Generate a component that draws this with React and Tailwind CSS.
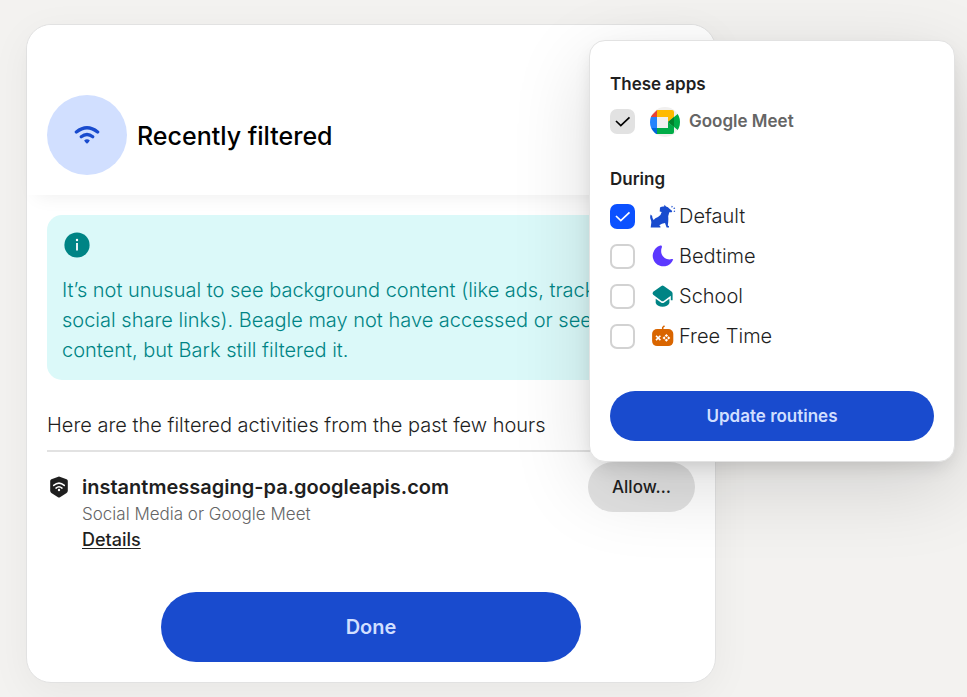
import React from "react";

function WifiIcon({ className }) {
  return (
    <svg viewBox="0 0 26 20" className={className} fill="none" stroke="currentColor" aria-hidden="true">
      <path d="M2.4 7Q13 -1.4 23.6 7" strokeWidth="3.4" strokeLinecap="round" />
      <path d="M7.2 11.8Q13 7.2 18.8 11.8" strokeWidth="3.2" strokeLinecap="round" />
      <path d="M10.2 15.2Q13 13.2 15.8 15.2Q15 17.6 13 18.8Q11 17.6 10.2 15.2Z" fill="currentColor" stroke="none" />
    </svg>
  );
}

function ShieldIcon() {
  return (
    <svg viewBox="0 0 20 22" className="h-[22px] w-5 shrink-0" aria-hidden="true">
      <path d="M9 .4 16.6 3.3Q17.8 3.8 17.8 5V14.6Q17.8 16.2 16.6 17.1L10 21.2Q9 21.8 8 21.2L1.4 17.1Q.2 16.2 .2 14.6V5Q.2 3.8 1.4 3.3Z" fill="#1f1f1f" />
      <path d="M3.7 9.4Q9 4.8 14.3 9.4M6 12.1Q9 9.5 12 12.1" fill="none" stroke="#fff" strokeWidth="1.5" strokeLinecap="round" />
      <circle cx="9" cy="14" r="1.2" fill="#fff" />
    </svg>
  );
}

function InfoIcon() {
  return (
    <svg viewBox="0 0 30 30" className="size-[30px]" aria-hidden="true">
      <circle cx="15" cy="15" r="12.6" fill="#008485" />
      <circle cx="15" cy="10" r="1.2" fill="#fff" />
      <path d="M15 13v7.6" stroke="#fff" strokeWidth="1.8" />
    </svg>
  );
}

function MeetIcon() {
  return (
    <svg viewBox="0 0 30 30" className="size-[30px] shrink-0" aria-hidden="true">
      <clipPath id="meet-disc"><circle cx="15" cy="15" r="15" /></clipPath>
      <g clipPath="url(#meet-disc)">
        <path fill="#f1f0ef" d="M0 0h30v30H0z" />
        <path fill="#ea4335" d="M0 10 7 3v7z" />
        <path fill="#2684fc" d="M0 10h7v11H0z" />
        <path fill="#0066da" d="M0 21h7v6H0z" />
        <path fill="#ffba00" d="M7 3h15q2 0 2 2v5l-6 5v-5H7z" />
        <path fill="#00ac47" d="M7 21h11v-6l6 5v5q0 2-2 2H7z" />
        <path fill="#00ac47" d="M18 15 28 6.8q2-1 2 1v14.4q0 2-2 1z" />
        <path fill="#00832d" d="M18 15l6-5v10z" />
      </g>
    </svg>
  );
}

function DogIcon() {
  return (
    <svg viewBox="0 0 26 26" className="size-[26px]" aria-hidden="true">
      <path d="M.7 11.5Q-.4 14 .7 16.5Q1.6 18.4 1.2 20.5L.7 24.5H10.4Q10.8 23 9.2 22.2Q11.8 20.6 15 20L16.6 24.5H19V23.3L17.8 22.6Q18.6 17.6 18.2 13.2L19.3 9.2H21.6Q22.4 8.7 22 7.8L19.2 5.6Q18.3 3.6 16 3.4L14.5 1.7L14.2 3.5Q11.9 3.1 10 4.6L9.7 8.6L11.7 9.1Q11.2 12.3 8 14Q5 15 3.6 17Q2.1 15.6 2.2 13Z" fill="#194bce" />
      <path d="M21.7 4.4 22.3 3M23.6 5.6 25 5M23.8 7.9 25 8.6" stroke="#194bce" strokeWidth="1.1" />
    </svg>
  );
}

function MoonIcon() {
  return (
    <svg viewBox="0 0 26 26" className="size-[26px]" aria-hidden="true">
      <path d="M10.3 2.6A10.6 10.6 0 1 0 23.2 16.6Q22.8 15.8 21.8 16.1C14.8 18 9 11 11.9 4.3Q12.3 2.1 10.3 2.6Z" fill="#5c38ff" />
    </svg>
  );
}

function CapIcon() {
  return (
    <svg viewBox="0 0 26 26" className="size-[26px]" aria-hidden="true">
      <path d="M11.4 3 3.2 8.8Q1.8 10.2 3.2 11.7L11.2 17.8Q12.6 18.8 14 17.8L20.8 12.8V17.2H22.6V10.6Q22.6 9.4 21.6 8.6L13.8 3Q12.6 2.2 11.4 3Z" fill="#008485" />
      <path d="M5.7 15.8 11 19.6Q12.6 20.6 14.2 19.6L19.4 15.8V20Q17.6 23.8 12.6 23.8Q7.5 23.8 5.7 20Z" fill="#008485" />
    </svg>
  );
}

function GameIcon() {
  return (
    <svg viewBox="0 0 26 26" className="size-[26px]" aria-hidden="true">
      <path d="M12.7 7V4.5L14.5 2.8" fill="none" stroke="#d96500" strokeWidth="1.5" />
      <rect x="2.1" y="6.1" width="21.2" height="17" rx="5" fill="#d96500" />
      <path d="m6 12.7 4.4 4.4m0-4.4L6 17.1" stroke="#fff" strokeWidth="1.6" />
      <path d="m16.4 11 1.7 1.8-1.7 1.2-1.7-1.2zm0 7.8 1.7-1.8-1.7-1.2-1.7 1.2zm-3.9-3.9 1.8-1.7 1.2 1.7-1.2 1.7zm7.8 0-1.8-1.7-1.2 1.7 1.2 1.7z" fill="#fff" />
    </svg>
  );
}

function CheckBox({ id, ...props }) {
  return (
    <span className="grid shrink-0">
      <input
        id={id}
        type="checkbox"
        className="peer col-start-1 row-start-1 size-[25px] appearance-none rounded-[7px] border-2 border-[#d2d2d2] bg-white checked:border-[#0b51ff] checked:bg-[#0b51ff] disabled:border-[#e2e2e2] disabled:bg-[#e2e2e2]"
        {...props}
      />
      <svg
        viewBox="0 0 25 25"
        className="pointer-events-none invisible col-start-1 row-start-1 size-[25px] text-white peer-checked:visible peer-disabled:text-black"
        fill="none"
        stroke="currentColor"
        strokeWidth="1.7"
        aria-hidden="true"
      >
        <path d="m6 12 4.8 4.6 8.7-8.3" />
      </svg>
    </span>
  );
}

const routines = [
  { id: "default", label: "Default", Icon: DogIcon, checked: true },
  { id: "bedtime", label: "Bedtime", Icon: MoonIcon },
  { id: "school", label: "School", Icon: CapIcon },
  { id: "free-time", label: "Free Time", Icon: GameIcon },
];

function RoutinePopover() {
  return (
    <form
      onSubmit={(e) => e.preventDefault()}
      className="absolute bottom-full left-px z-10 w-[366px] rounded-2xl border border-[#e2e2e2] bg-white p-5 shadow-[0_8px_20px_-6px_rgba(0,0,0,0.15),0_24px_80px_rgba(0,0,0,0.14)]"
    >
      <fieldset>
        <legend className="pt-2 text-[17px] leading-[30px] font-semibold">These apps</legend>
        <div className="flex h-[45px] items-center gap-[15px]">
          <CheckBox id="meet" defaultChecked disabled />
          <label htmlFor="meet" className="flex items-center gap-[9px] text-[17px] font-semibold text-[#656565]">
            <MeetIcon />
            Google Meet
          </label>
        </div>
      </fieldset>
      <fieldset className="mt-5">
        <legend className="mb-0.5 text-[17px] leading-[30px] font-semibold">During</legend>
        {routines.map(({ id, label, Icon, checked }) => (
          <div key={id} className="flex h-10 items-center gap-[15px]">
            <CheckBox id={id} defaultChecked={checked} />
            <label htmlFor={id} className="flex items-center gap-[3px] text-[20px] font-light">
              <Icon />
              {label}
            </label>
          </div>
        ))}
      </fieldset>
      <button type="submit" className="mt-[35px] h-[50px] w-full rounded-full bg-[#194bce] pt-0.5 text-[17px] font-semibold text-[#d1dfff]">
        Update routines
      </button>
    </form>
  );
}

export default function App() {
  return (
    <main className="min-h-screen bg-[#f3f2f0] px-[26px] pt-6 pb-[14px] font-['Inter','Liberation_Sans',sans-serif] text-[#1f1f1f]">
      <section className="max-w-[690px] rounded-[25px] border border-[#e2e2e2] bg-white shadow-[0_10px_40px_rgba(0,0,0,0.05)]">
        <header className="flex items-center gap-[10px] rounded-t-[25px] bg-white px-5 pt-[70px] pb-5 shadow-[0_10px_20px_-10px_rgba(0,0,0,0.08)]">
          <div className="grid size-20 shrink-0 place-items-center rounded-full bg-[#d1dfff]">
            <WifiIcon className="h-5 w-[26px] text-[#194bce]" />
          </div>
          <h1 className="pt-1 text-[25px] font-medium text-black">Recently filtered</h1>
        </header>
        <div className="p-5">
          <div className="rounded-[15px] bg-[#dbf9f9] p-[15px] text-[20px] leading-[30px] font-light text-[#008485]">
            <InfoIcon />
            <p className="mt-[15px]">
              It’s not unusual to see background content (like ads, trackers, or social share links). Beagle may not have accessed or seen this content, but Bark still filtered it.
            </p>
          </div>
          <h2 className="mt-[30px] border-b-2 border-[#e2e2e2] pb-[10px] text-[20px] leading-[30px] font-light">
            Here are the filtered activities from the past few hours
          </h2>
          <div className="flex items-start justify-between pt-[10px]">
            <div className="flex gap-3 pt-[10px]">
              <div className="flex h-[30px] items-center pl-[3px]">
                <ShieldIcon />
              </div>
              <div>
                <h3 className="text-[20px] leading-[30px] font-semibold">instantmessaging-pa.googleapis.com</h3>
                <p className="text-[17px] leading-[25px] font-light text-[#656565]">Social Media or Google Meet</p>
                <a href="#details" className="block text-[18px] leading-[25px] font-medium underline underline-offset-2">
                  Details
                </a>
              </div>
            </div>
            <div className="relative">
              <button type="button" className="h-[50px] w-[107px] rounded-full bg-[#e2e2e2] pt-0.5 text-[17px] font-medium">
                Allow…
              </button>
              <RoutinePopover />
            </div>
          </div>
          <button type="button" className="mx-auto mt-10 block h-[70px] w-full max-w-[420px] rounded-full bg-[#194bce] text-[20px] font-semibold text-[#d1dfff]">
            Done
          </button>
        </div>
      </section>
    </main>
  );
}
